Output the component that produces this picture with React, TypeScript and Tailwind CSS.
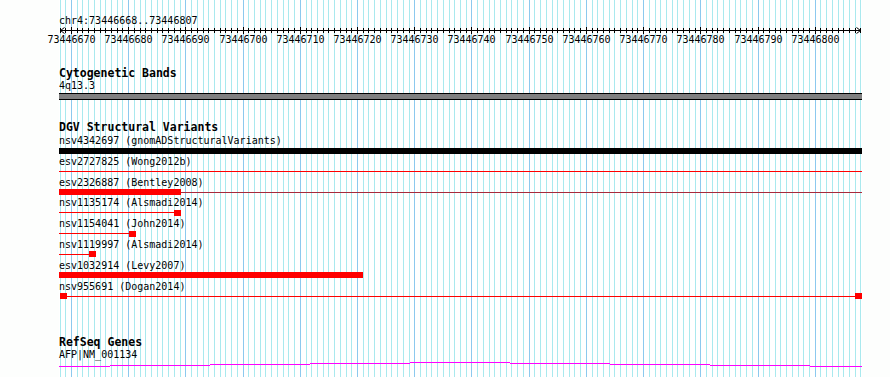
import React from 'react';

const START = 73446668;
const END = 73446807;
const N = END - START; // 139 bp steps, 140 bases
const X0 = 60; // first base line, page px
const BP = 5.7214;
const LEFT = 59; // track content left edge

const baseX = (i: number) => X0 + i * BP;

const variants = [
  { name: 'nsv4342697 (gnomADStructuralVariants)', kind: 'black' },
  { name: 'esv2727825 (Wong2012b)', kind: 'line' },
  { name: 'esv2326887 (Bentley2008)', kind: 'barline', end: 122 },
  { name: 'nsv1135174 (Alsmadi2014)', kind: 'tail', end: 115 },
  { name: 'nsv1154041 (John2014)', kind: 'tail', end: 70 },
  { name: 'nsv1119997 (Alsmadi2014)', kind: 'tail', end: 30 },
  { name: 'esv1032914 (Levy2007)', kind: 'bar', end: 304 },
  { name: 'nsv955691 (Dogan2014)', kind: 'ends' },
];

// magenta transcript line, drawn as 1px steps
const geneSteps = [
  [0, 51, 6],
  [51, 151, 5],
  [151, 251, 4],
  [251, 351, 3],
  [351, 451, 2],
  [451, 551, 3],
  [551, 651, 4],
  [651, 751, 5],
  [751, 803, 6],
];

function Grid() {
  const lines = [];
  for (let i = 0; i <= N + 1; i++) {
    const major = (START + i) % 10 === 0;
    lines.push(
      <rect key={i} x={Math.floor(baseX(i))} y={0} width={1} height={377} fill={major ? '#8cc9ee' : '#a9e9ee'} />
    );
  }
  return (
    <svg className="absolute inset-0" width={890} height={377} shapeRendering="crispEdges">
      {lines}
    </svg>
  );
}

function Axis() {
  const ticks = [];
  for (let i = 0; i <= N + 1; i++) {
    const x = Math.floor(baseX(i)) - LEFT;
    const major = (START + i) % 10 === 0;
    ticks.push(<rect key={i} x={x} y={major ? 1 : 2} width={1} height={major ? 7 : 5} fill="#000" />);
  }
  return (
    <svg width={803} height={9} shapeRendering="crispEdges" className="block overflow-visible">
      <rect x={1} y={4} width={801} height={1} fill="#000" />
      {ticks}
      <path d="M1.5 4.5 L5.5 1.5 M1.5 4.5 L5.5 7.5" stroke="#000" strokeWidth={1} fill="none" shapeRendering="auto" />
      <path d="M801.5 4.5 L797.5 1.5 M801.5 4.5 L797.5 7.5" stroke="#000" strokeWidth={1} fill="none" shapeRendering="auto" />
    </svg>
  );
}

function TickLabels() {
  const labels = [];
  for (let i = 0; i <= N; i++) {
    const pos = START + i;
    if (pos % 10 !== 0) continue;
    labels.push(
      <span
        key={pos}
        className="absolute top-0 -translate-x-1/2 whitespace-nowrap"
        style={{ left: Math.floor(baseX(i)) + 0.5 - LEFT }}
      >
        {pos}
      </span>
    );
  }
  return <div className="relative h-[10px] leading-[10px]">{labels}</div>;
}

function Feature({ kind, end }: { kind: string; end?: number }) {
  if (kind === 'black') return <div className="h-[6px] w-full bg-black" />;
  if (kind === 'line')
    return (
      <div className="flex h-[6px] items-center">
        <div className="h-px w-full bg-[#ff0000]" />
      </div>
    );
  if (kind === 'bar') return <div className="h-[6px] bg-[#ff0000]" style={{ width: end }} />;
  if (kind === 'barline')
    return (
      <div className="flex h-[6px] items-center">
        <div className="h-[6px] bg-[#ff0000]" style={{ width: end }} />
        <div className="h-px flex-1 bg-[#a82a3c]" />
      </div>
    );
  if (kind === 'tail')
    return (
      <div className="flex h-[6px] items-center">
        <div className="h-px bg-[#ff0000]" style={{ width: end }} />
        <div className="h-[6px] w-[7px] bg-[#ff0000]" />
      </div>
    );
  return (
    <div className="flex h-[6px] items-center pl-px">
      <div className="h-[6px] w-[7px] bg-[#ff0000]" />
      <div className="h-px flex-1 bg-[#ff0000]" />
      <div className="h-[6px] w-[7px] bg-[#ff0000]" />
    </div>
  );
}

export default function App() {
  return (
    <div className="relative h-[377px] w-[890px] overflow-hidden bg-[#fdfefd] font-['DejaVu_Sans_Mono',monospace] text-[10px] text-black">
      <div className="absolute inset-y-0 left-[59px] w-[803px] bg-white" />
      <Grid />

      <div className="relative flex w-[862px] flex-col pl-[59px]">
        {/* ruler */}
        <div className="mt-[16px] h-[10px] whitespace-nowrap leading-[10px]">chr4:73446668..73446807</div>
        <Axis />
        <TickLabels />

        {/* cytogenetic bands */}
        <div className="mt-[22px] h-[12px] text-[11.5px] font-bold leading-[12px]">Cytogenetic Bands</div>
        <div className="mt-[2px] h-[10px] leading-[10px]">4q13.3</div>
        <div className="mt-[2px] h-[7px] border-y border-black bg-[#808080]" />

        {/* DGV */}
        <div className="mt-[21px] h-[12px] text-[11.5px] font-bold leading-[12px]">DGV Structural Variants</div>
        <div className="mt-[3px] flex flex-col">
          {variants.map((v) => (
            <div key={v.name} className="flex h-[20.8px] flex-col">
              <div className="h-[11.5px] whitespace-nowrap leading-[10px]">{v.name}</div>
              <Feature kind={v.kind} end={v.end} />
            </div>
          ))}
        </div>

        {/* RefSeq */}
        <div className="mt-[34px] h-[12px] text-[11.5px] font-bold leading-[12px]">RefSeq Genes</div>
        <div className="mt-[2px] h-[10px] leading-[10px]">AFP|NM_001134</div>
        <svg width={803} height={8} shapeRendering="crispEdges" className="block">
          {geneSteps.map(([a, b, y]) => (
            <rect key={a} x={a} y={y} width={b - a} height={1} fill="#ff00ff" />
          ))}
        </svg>
      </div>
    </div>
  );
}
